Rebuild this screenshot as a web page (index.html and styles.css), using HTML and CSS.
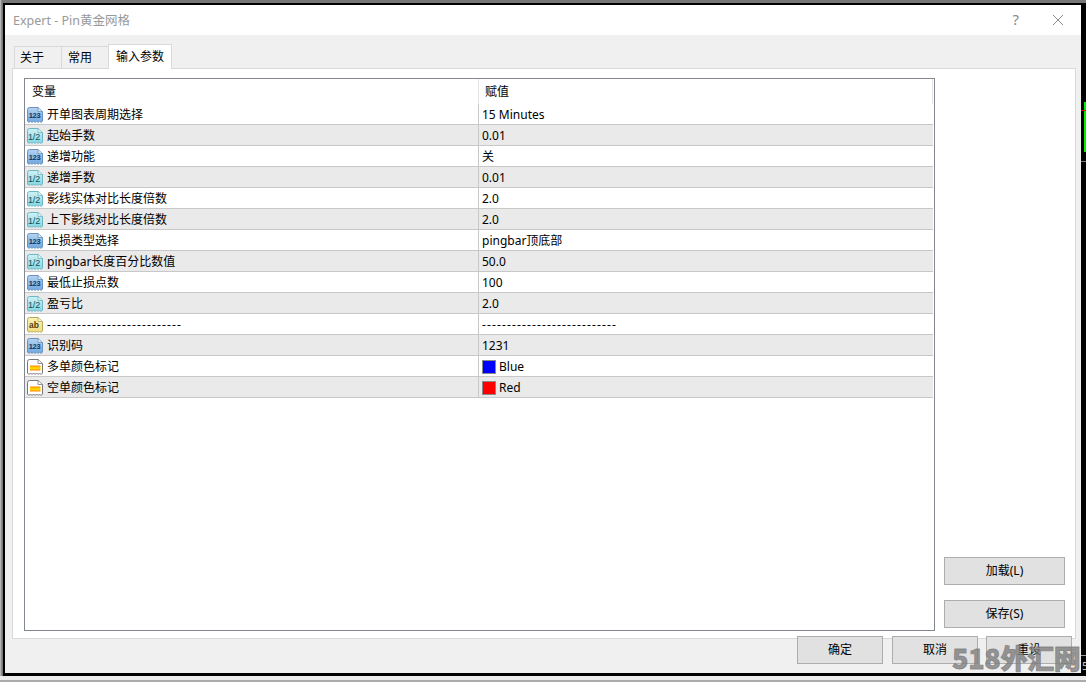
FILE: index.html
```html
<!DOCTYPE html>
<html lang="zh">
<head>
<meta charset="utf-8">
<title>Expert - Pin黄金网格</title>
<link rel="stylesheet" href="styles.css">
</head>
<body>
<svg class="defs" width="0" height="0" aria-hidden="true">
  <defs>
    <linearGradient id="gBlue" x1="0" y1="0" x2="0" y2="1"><stop offset="0" stop-color="#b4d4f2"/><stop offset="1" stop-color="#6ea6de"/></linearGradient>
    <linearGradient id="gCyan" x1="0" y1="0" x2="0" y2="1"><stop offset="0" stop-color="#cff2f5"/><stop offset="1" stop-color="#84d6e2"/></linearGradient>
    <linearGradient id="gYellow" x1="0" y1="0" x2="0" y2="1"><stop offset="0" stop-color="#fbf2b8"/><stop offset="1" stop-color="#eeda80"/></linearGradient>
    <linearGradient id="gOrange" x1="0" y1="0" x2="0" y2="1"><stop offset="0" stop-color="#ff8c00"/><stop offset="0.55" stop-color="#ffe000"/><stop offset="1" stop-color="#ff8400"/></linearGradient>
    <symbol id="sheet" viewBox="0 0 16 16">
      <path class="sheet-body" d="M.5 2.5 Q.5 .5 2.5 .5 H11 L15.5 4.5 V14 L14 15.5 L12.5 14 L11 15.5 L9.5 14 L8 15.5 L6.5 14 L5 15.5 L3.5 14 L2 15.5 L.5 14 Z"/>
      <path class="sheet-fold" d="M11 .5 V4.5 H15.5"/>
    </symbol>
  </defs>
</svg>
<div class="screen">
  <div class="desk">
    <main class="dialog">
      <header class="titlebar">
        <span class="title">Expert - Pin黄金网格</span>
        <span class="help">?</span>
        <svg class="close" width="12" height="12" viewBox="0 0 12 12"><path d="M1 1 11 11M11 1 1 11" stroke="#8a8a8a" stroke-width="1" fill="none"/></svg>
      </header>
      <nav class="tabs">
        <span class="tab">关于</span>
        <span class="tab">常用</span>
        <span class="tab tab-active">输入参数</span>
      </nav>
      <section class="panel">
        <div class="list">
          <div class="row head"><span class="name">变量</span><span class="value">赋值</span></div>
          <div class="row"><span class="name"><svg class="ic ic-int" width="16" height="16"><use href="#sheet"/><text x="7.5" y="10.5">123</text></svg>开单图表周期选择</span><span class="value">15 Minutes</span></div>
          <div class="row"><span class="name"><svg class="ic ic-dbl" width="16" height="16"><use href="#sheet"/><text x="7" y="11.5">1/2</text></svg>起始手数</span><span class="value">0.01</span></div>
          <div class="row"><span class="name"><svg class="ic ic-int" width="16" height="16"><use href="#sheet"/><text x="7.5" y="10.5">123</text></svg>递增功能</span><span class="value">关</span></div>
          <div class="row"><span class="name"><svg class="ic ic-dbl" width="16" height="16"><use href="#sheet"/><text x="7" y="11.5">1/2</text></svg>递增手数</span><span class="value">0.01</span></div>
          <div class="row"><span class="name"><svg class="ic ic-dbl" width="16" height="16"><use href="#sheet"/><text x="7" y="11.5">1/2</text></svg>影线实体对比长度倍数</span><span class="value">2.0</span></div>
          <div class="row"><span class="name"><svg class="ic ic-dbl" width="16" height="16"><use href="#sheet"/><text x="7" y="11.5">1/2</text></svg>上下影线对比长度倍数</span><span class="value">2.0</span></div>
          <div class="row"><span class="name"><svg class="ic ic-int" width="16" height="16"><use href="#sheet"/><text x="7.5" y="10.5">123</text></svg>止损类型选择</span><span class="value">pingbar顶底部</span></div>
          <div class="row"><span class="name"><svg class="ic ic-dbl" width="16" height="16"><use href="#sheet"/><text x="7" y="11.5">1/2</text></svg>pingbar长度百分比数值</span><span class="value">50.0</span></div>
          <div class="row"><span class="name"><svg class="ic ic-int" width="16" height="16"><use href="#sheet"/><text x="7.5" y="10.5">123</text></svg>最低止损点数</span><span class="value">100</span></div>
          <div class="row"><span class="name"><svg class="ic ic-dbl" width="16" height="16"><use href="#sheet"/><text x="7" y="11.5">1/2</text></svg>盈亏比</span><span class="value">2.0</span></div>
          <div class="row"><span class="name"><svg class="ic ic-str" width="16" height="16"><use href="#sheet"/><text x="7" y="11">ab</text></svg><span class="dash">---------------------------</span></span><span class="value"><span class="dash">---------------------------</span></span></div>
          <div class="row"><span class="name"><svg class="ic ic-int" width="16" height="16"><use href="#sheet"/><text x="7.5" y="10.5">123</text></svg>识别码</span><span class="value">1231</span></div>
          <div class="row"><span class="name"><svg class="ic ic-clr" width="16" height="16"><use href="#sheet"/><rect x="3" y="6.5" width="10.5" height="5" fill="url(#gOrange)"/></svg>多单颜色标记</span><span class="value"><i class="swatch swatch-blue"></i>Blue</span></div>
          <div class="row"><span class="name"><svg class="ic ic-clr" width="16" height="16"><use href="#sheet"/><rect x="3" y="6.5" width="10.5" height="5" fill="url(#gOrange)"/></svg>空单颜色标记</span><span class="value"><i class="swatch swatch-red"></i>Red</span></div>
        </div>
        <div class="side">
          <button class="btn btn-side">加载(L)</button>
          <button class="btn btn-side">保存(S)</button>
        </div>
      </section>
      <footer class="actions">
        <button class="btn btn-foot">确定</button>
        <button class="btn btn-foot">取消</button>
        <button class="btn btn-foot">重设</button>
      </footer>
    </main>
    <aside class="chart">
      <i class="candle"></i>
      <i class="chart-rule"></i>
      <i class="chart-dash"></i>
      <span class="chart-label">5</span>
    </aside>
  </div>
</div>
<div class="watermark">518外汇网</div>
</body>
</html>
```
FILE: styles.css
```css
* { box-sizing: border-box; }
html, body { margin: 0; height: 100%; }
body {
  position: relative;
  width: 1086px;
  height: 682px;
  overflow: hidden;
  background: #ececec;
  border-bottom: 2px solid #ababab;
  font-family: "Noto Sans", "Noto Sans CJK SC", sans-serif;
  font-size: 12px;
  color: #000;
}
.defs { position: absolute; }
.screen {
  height: 676px;
  padding: 3px 0 0 3px;
  background: linear-gradient(90deg, #c8c8c8 0, #777 2px, #777 3px, #777 100%);
}
.desk {
  display: flex;
  height: 673px;
  background: #000;
  padding: 2px 0 3px 2px;
}
.dialog {
  width: 1076px;
  height: 668px;
  background: #f0f0f0;
  display: flex;
  flex-direction: column;
}
.chart {
  flex: 1;
  min-width: 0;
  overflow: hidden;
  padding-top: 97px;
  display: flex;
  flex-direction: column;
  align-items: stretch;
}
.candle {
  display: block;
  position: relative;
  flex: none;
  height: 50px;
  margin-left: 3px;
  background: #00f000;
}
.candle::before {
  content: "";
  position: absolute;
  left: -3px;
  top: 8px;
  width: 5px;
  height: 1px;
  background: #e00000;
}
.chart-rule {
  display: block;
  flex: none;
  height: 1px;
  margin-top: 9px;
  background: #777;
}
.chart-dash {
  display: block;
  flex: none;
  height: 1px;
  margin-top: auto;
  border-top: 1px dashed #999;
}
.chart-label {
  flex: none;
  height: 17px;
  padding: 3px 0 0 1px;
  font-size: 11px;
  line-height: 14px;
  color: #ccc;
}
.titlebar {
  height: 30px;
  flex: none;
  background: #fff;
  display: flex;
  align-items: center;
  padding: 0 17px 2px 8px;
}
.title { font-size: 12.5px; color: #999; flex: 1; }
.help { font-size: 15px; color: #8a8a8a; margin-right: 33px; }
.close { display: block; margin-top: 2px; }
.tabs {
  height: 33px;
  flex: none;
  display: flex;
  align-items: flex-end;
  padding-left: 9px;
  position: relative;
  z-index: 1;
}
.tab {
  width: 48px;
  height: 22px;
  background: #f0f0f0;
  border: 1px solid #d9d9d9;
  border-bottom: 0;
  margin-right: -1px;
  padding-left: 5px;
  line-height: 22px;
}
.tab:nth-child(2) { padding-left: 6px; }
.tab-active {
  width: 64px;
  height: 25px;
  background: #fff;
  padding-left: 7px;
  line-height: 24px;
  margin-bottom: -1px;
}
.panel {
  width: 1064px;
  height: 571px;
  margin-left: 7px;
  flex: none;
  background: #fff;
  border: 1px solid #d9d9d9;
  display: flex;
  padding: 9px 9px 7px 11px;
  gap: 9px;
}
.list {
  width: 911px;
  border: 1px solid #828790;
  padding-right: 1px;
  background: #fff;
}
.row {
  display: flex;
  height: 21px;
  border-bottom: 1px solid #c8c8c8;
  line-height: 18px;
}
.row:nth-child(odd):not(.head) { background: #eaeaea; }
.row.head { height: 25px; border-bottom: 0; line-height: 24px; }
.name {
  width: 453px;
  flex: none;
  display: flex;
  align-items: center;
  padding: 2px 0 0 2px;
  white-space: nowrap;
}
.value {
  flex: 1;
  display: flex;
  align-items: center;
  padding: 2px 0 0 3px;
  border-left: 1px solid #c8c8c8;
  white-space: nowrap;
}
.head .name { padding: 0 0 0 7px; }
.head .value {
  padding: 0 0 0 6px;
  border-left: 1px solid #e5e5e5;
  border-right: 1px solid #e5e5e5;
}
.dash { letter-spacing: 1.14px; }
.ic { flex: none; margin-right: 4px; display: block; }
.sheet-body { fill: var(--fill); stroke: var(--edge); }
.sheet-fold { fill: #fff; fill-opacity: .55; stroke: var(--edge); stroke-width: .8; }
.ic text {
  font-family: "Liberation Sans", sans-serif;
  font-weight: 700;
  text-anchor: middle;
}
.ic-int { --fill: url(#gBlue); --edge: #6b92bd; }
.ic-int text { font-size: 7.5px; letter-spacing: -.3px; fill: #0f3560; }
.ic-dbl { --fill: url(#gCyan); --edge: #6db6c4; }
.ic-dbl text { font-size: 9px; letter-spacing: -.2px; fill: #12505e; font-weight: 400; }
.ic-str { --fill: url(#gYellow); --edge: #b9a95a; }
.ic-str text { font-size: 8.5px; fill: #4e4010; }
.ic-clr { --fill: #fff; --edge: #777; }
.swatch {
  display: block;
  width: 14px;
  height: 14px;
  margin-right: 3px;
  border: 1px solid #8a8a8a;
  flex: none;
}
.swatch-blue { background: #0000ff; }
.swatch-red { background: #ff0000; }
.side {
  width: 121px;
  display: flex;
  flex-direction: column;
  justify-content: flex-end;
  gap: 15px;
  padding-bottom: 3px;
}
.btn {
  font: inherit;
  color: #000;
  background: #e1e1e1;
  border: 1px solid #adadad;
  padding: 0 0 2px;
  display: block;
}
.btn-side { height: 28px; width: 121px; }
.actions {
  display: flex;
  gap: 9px;
  margin-top: -3px;
  padding-left: 792px;
  position: relative;
}
.btn-foot { width: 86px; height: 28px; }
.btn-foot:last-child { margin-left: -1px; }
.watermark {
  position: absolute;
  left: 952px;
  top: 640px;
  font-family: "Noto Sans CJK SC", sans-serif;
  font-weight: 900;
  font-size: 27px;
  line-height: 36px;
  letter-spacing: -.3px;
  -webkit-text-stroke: .8px rgba(125, 125, 125, .8);
  color: rgba(125, 125, 125, .8);
  white-space: nowrap;
}
```
